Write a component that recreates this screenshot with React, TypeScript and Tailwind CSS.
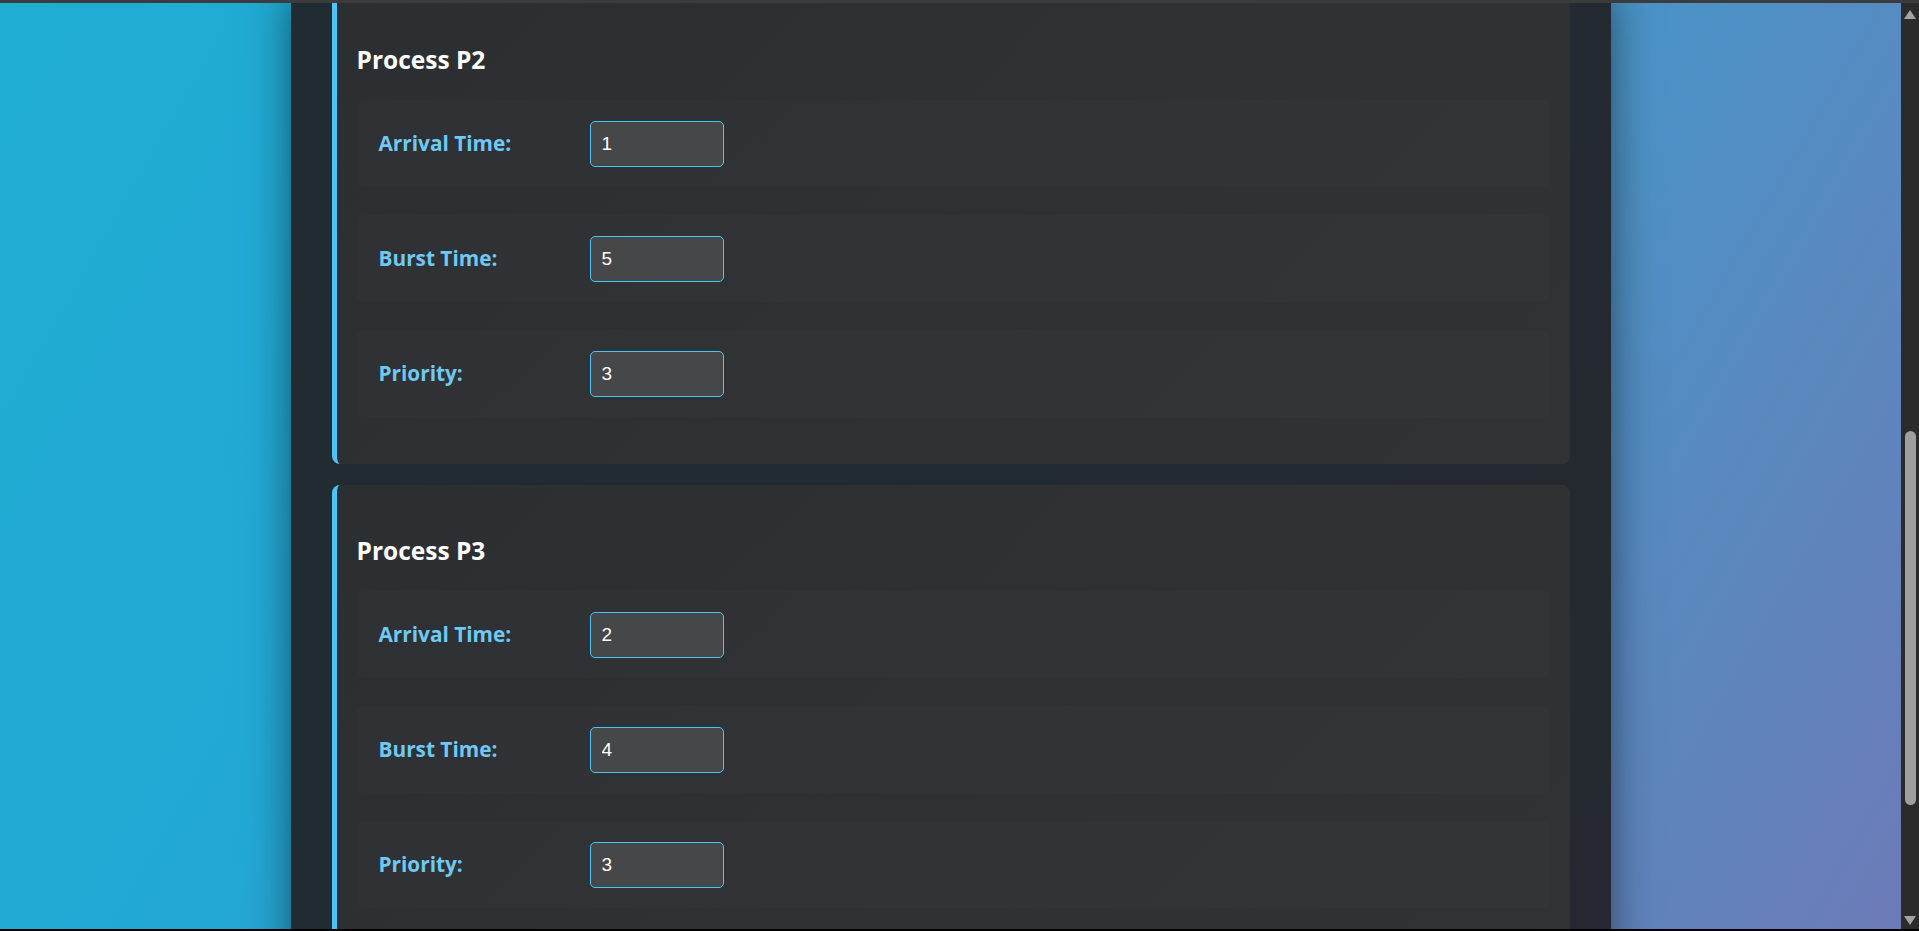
import { useState } from "react";

type Proc = {
    id: string;
    arrival: number;
    burst: number;
    priority: number;
};

const initial: Proc[] = [
    { id: "P2", arrival: 1, burst: 5, priority: 3 },
    { id: "P3", arrival: 2, burst: 4, priority: 3 },
];

function Field({
    label,
    value,
    onChange,
}: {
    label: string;
    value: number;
    onChange: (v: number) => void;
}) {
    return (
        <div className="h-[87px] flex items-center pl-[22px] rounded-md bg-[rgba(255,255,255,0.012)]">
            <label className="w-[211px] text-[20.8px] font-bold text-[#70c9f5] font-['Open_Sans',sans-serif]">
                {label}
            </label>
            <input
                type="number"
                value={value}
                onChange={(e) => onChange(Number(e.target.value))}
                className="
                    w-[134px] h-[46px] pl-[11px] rounded-[5px] border border-[#4fc3f7]
                    bg-[#464749] text-white text-[19px] font-['Liberation_Sans',Arial,sans-serif]
                    outline-none [appearance:textfield]
                    [&::-webkit-inner-spin-button]:appearance-none [&::-webkit-outer-spin-button]:appearance-none
                "
            />
        </div>
    );
}

function ProcessCard({
    proc,
    onUpdate,
}: {
    proc: Proc;
    onUpdate: (p: Proc) => void;
}) {
    return (
        <div className="rounded-lg border-l-[5px] border-[#4fc3f7] bg-[linear-gradient(135deg,#2c2f32,#313233)] px-5 pt-5 pb-[47px]">
            {/* タイトル */}
            <h3 className="mt-[30px] mb-[24px] h-[32px] leading-[32px] text-[24.5px] font-bold text-white font-['Open_Sans',sans-serif]">
                Process {proc.id}
            </h3>

            <div className="flex flex-col gap-[28px]">
                <Field
                    label="Arrival Time:"
                    value={proc.arrival}
                    onChange={(v) => onUpdate({ ...proc, arrival: v })}
                />
                <Field
                    label="Burst Time:"
                    value={proc.burst}
                    onChange={(v) => onUpdate({ ...proc, burst: v })}
                />
                <Field
                    label="Priority:"
                    value={proc.priority}
                    onChange={(v) => onUpdate({ ...proc, priority: v })}
                />
            </div>
        </div>
    );
}

export default function App() {
    const [procs, setProcs] = useState<Proc[]>(initial);

    return (
        <div className="h-[931px] flex flex-col overflow-hidden bg-black">
            {/* 上の帯 */}
            <div className="h-[3px] bg-[#3c3c3c]" />

            <div className="flex-1 flex min-h-0">
                {/* ページ本体 */}
                <div className="flex-1 min-w-0 overflow-hidden bg-[linear-gradient(120deg,#1fadd2_0%,#23a8d5_30%,#4a93c6_68%,#6c7bb8_100%)]">
                    <div className="w-[1320px] min-h-full mx-auto px-[41px] pb-10 bg-[rgba(33,33,36,0.92)] shadow-[0_0_40px_rgba(0,0,0,0.5)]">
                        <div className="-mt-[9px] flex flex-col gap-[21px]">
                            {procs.map((p) => (
                                <ProcessCard
                                    key={p.id}
                                    proc={p}
                                    onUpdate={(np) =>
                                        setProcs(procs.map((x) => (x.id === np.id ? np : x)))
                                    }
                                />
                            ))}
                        </div>
                    </div>
                </div>

                {/* スクロールバー */}
                <div className="w-[18px] flex flex-col items-center bg-[#2b2b2b]">
                    <div className="h-[17px] flex items-end justify-center pb-[1px]">
                        <svg width="12" height="9" viewBox="0 0 12 9">
                            <path d="M6 0 L12 9 L0 9 Z" fill="#a3a3a3" />
                        </svg>
                    </div>
                    <div className="flex-1 w-full flex flex-col items-center pt-[411px]">
                        <div className="w-[11px] h-[374px] rounded-full bg-[#9f9f9f]" />
                    </div>
                    <div className="h-[17px] flex items-center justify-center">
                        <svg width="12" height="9" viewBox="0 0 12 9">
                            <path d="M0 0 L12 0 L6 9 Z" fill="#a3a3a3" />
                        </svg>
                    </div>
                </div>
            </div>

            {/* 下の線 */}
            <div className="h-[2px] bg-black" />
        </div>
    );
}
